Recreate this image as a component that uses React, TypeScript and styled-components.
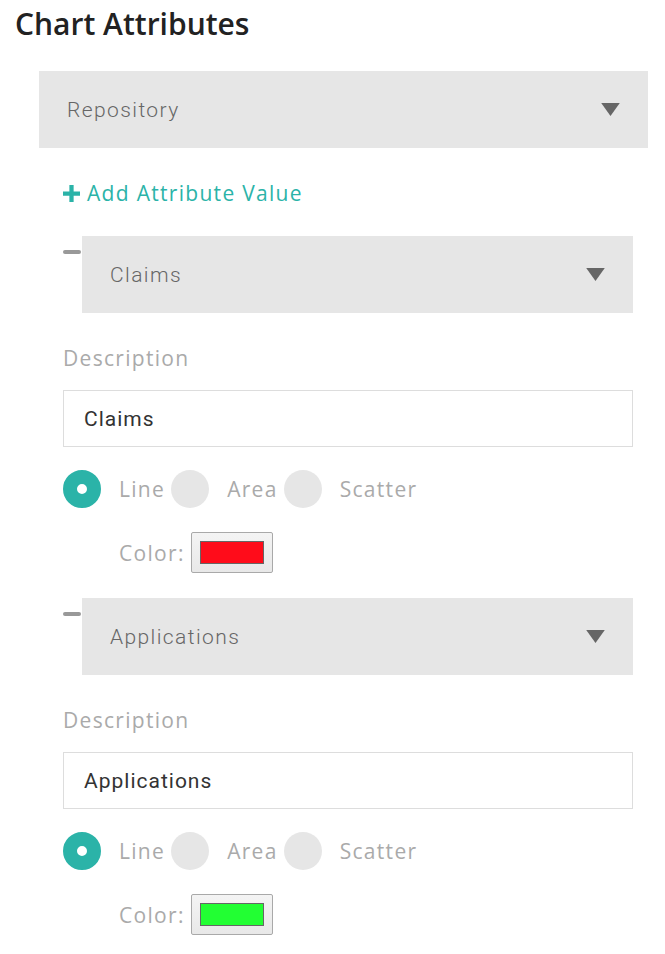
import styled, { createGlobalStyle } from 'styled-components'

const GlobalStyle = createGlobalStyle`
  body {
    margin: 0;
    background: #ffffff;
    font-family: "Open Sans", "Noto Sans", sans-serif;
  }
`

const TEAL = '#2bb3a8'

interface Attribute {
  name: string
  color: string
}

const attributes: Attribute[] = [
  { name: 'Claims', color: '#ff0c1a' },
  { name: 'Applications', color: '#22ff33' },
]

const chartTypes = ['Line', 'Area', 'Scatter']

function Dropdown({ label }: { label: string }) {
  return (
    <SelectBox>
      <SelectText>{label}</SelectText>
      <Caret viewBox="0 0 20 14">
        <path d="M0 0 H20 L10 14 Z" fill="#666" />
      </Caret>
    </SelectBox>
  )
}

function AttributeGroup({ attr }: { attr: Attribute }) {
  return (
    <Group>
      <GroupHeader>
        <Collapse />
        <Dropdown label={attr.name} />
      </GroupHeader>

      <FieldLabel>Description</FieldLabel>
      <TextInput defaultValue={attr.name} />

      <RadioRow>
        {chartTypes.map((type, i) => (
          <RadioOption key={type}>
            <RadioDot $checked={i === 0} />
            <OptionLabel>{type}</OptionLabel>
          </RadioOption>
        ))}
      </RadioRow>

      <ColorRow>
        <OptionLabel>Color:</OptionLabel>
        <Swatch>
          <SwatchFill style={{ background: attr.color }} />
        </Swatch>
      </ColorRow>
    </Group>
  )
}

export default function App() {
  return (
    <>
      <GlobalStyle />
      <Page>
        <Title>Chart Attributes</Title>
        <Section>
          <Dropdown label="Repository" />
          <Body>
            <AddLink>
              <Plus viewBox="0 0 16 16">
                <path d="M6 0 H10 V6 H16 V10 H10 V16 H6 V10 H0 V6 H6 Z" fill={TEAL} />
              </Plus>
              Add Attribute Value
            </AddLink>
            {attributes.map((a) => (
              <AttributeGroup key={a.name} attr={a} />
            ))}
          </Body>
        </Section>
      </Page>
    </>
  )
}

const Page = styled.div`
  padding: 4px 0 0 15px;
  width: 665px;
  box-sizing: border-box;
`

const Title = styled.h1`
  margin: 0;
  font-size: 30px;
  font-weight: 600;
  line-height: 40px;
  color: #222;
`

const Section = styled.div`
  margin: 27px 0 0 24px;
  width: 609px;
`

const SelectBox = styled.div`
  flex: 1;
  height: 77px;
  background: #e6e6e6;
  display: flex;
  align-items: center;
  justify-content: space-between;
  padding: 0 28px;
  box-sizing: border-box;
`

const SelectText = styled.span`
  font-family: Roboto, "Liberation Sans", sans-serif;
  font-size: 21px;
  font-weight: 300;
  color: #666;
  letter-spacing: 1.4px;
`

const Caret = styled.svg`
  width: 19px;
  height: 13px;
`

const Body = styled.div`
  padding: 0 15px 0 24px;
`

const AddLink = styled.a`
  display: flex;
  align-items: center;
  gap: 7px;
  height: 40px;
  margin-top: 25px;
  font-size: 21px;
  letter-spacing: 1.3px;
  color: ${TEAL};
  cursor: pointer;
`

const Plus = styled.svg`
  width: 17px;
  height: 17px;
`

const Group = styled.div`
  margin-top: 23px;
  display: flex;
  flex-direction: column;
  & + & {
    margin-top: 25px;
  }
`

const GroupHeader = styled.div`
  display: flex;
  align-items: flex-start;
`

const Collapse = styled.span`
  width: 18px;
  height: 4px;
  margin: 14px 1px 0 0;
  background: #999;
  border-radius: 2px;
`

const FieldLabel = styled.label`
  margin-top: 30px;
  font-size: 21px;
  letter-spacing: 1.3px;
  line-height: 30px;
  color: #aaa;
`

const TextInput = styled.input`
  margin-top: 17px;
  height: 57px;
  border: 1px solid #ddd;
  padding: 0 20px;
  box-sizing: border-box;
  font-family: Roboto, "Liberation Sans", sans-serif;
  font-size: 21px;
  letter-spacing: 1px;
  color: #333;
  outline: none;
`

const RadioRow = styled.div`
  margin-top: 23px;
  display: flex;
  align-items: center;
`

const RadioOption = styled.div`
  display: flex;
  align-items: center;
  gap: 18px;
  margin-right: 6px;
`

const RadioDot = styled.span<{ $checked: boolean }>`
  width: 38px;
  height: 38px;
  border-radius: 50%;
  box-sizing: border-box;
  background: ${(p) => (p.$checked ? '#fff' : '#e6e6e6')};
  border: ${(p) => (p.$checked ? `14px solid ${TEAL}` : 'none')};
`

const OptionLabel = styled.span`
  font-size: 21px;
  letter-spacing: 1.3px;
  color: #aaa;
`

const ColorRow = styled.div`
  margin: 24px 0 0 56px;
  display: flex;
  align-items: center;
  gap: 6px;
`

const Swatch = styled.div`
  width: 82px;
  height: 41px;
  padding: 8px;
  box-sizing: border-box;
  background: linear-gradient(#f4f4f4, #e8e8e8);
  border: 1px solid #a9a9a9;
  border-radius: 2px;
`

const SwatchFill = styled.div`
  width: 100%;
  height: 100%;
  border: 1px solid #666;
  box-sizing: border-box;
`
